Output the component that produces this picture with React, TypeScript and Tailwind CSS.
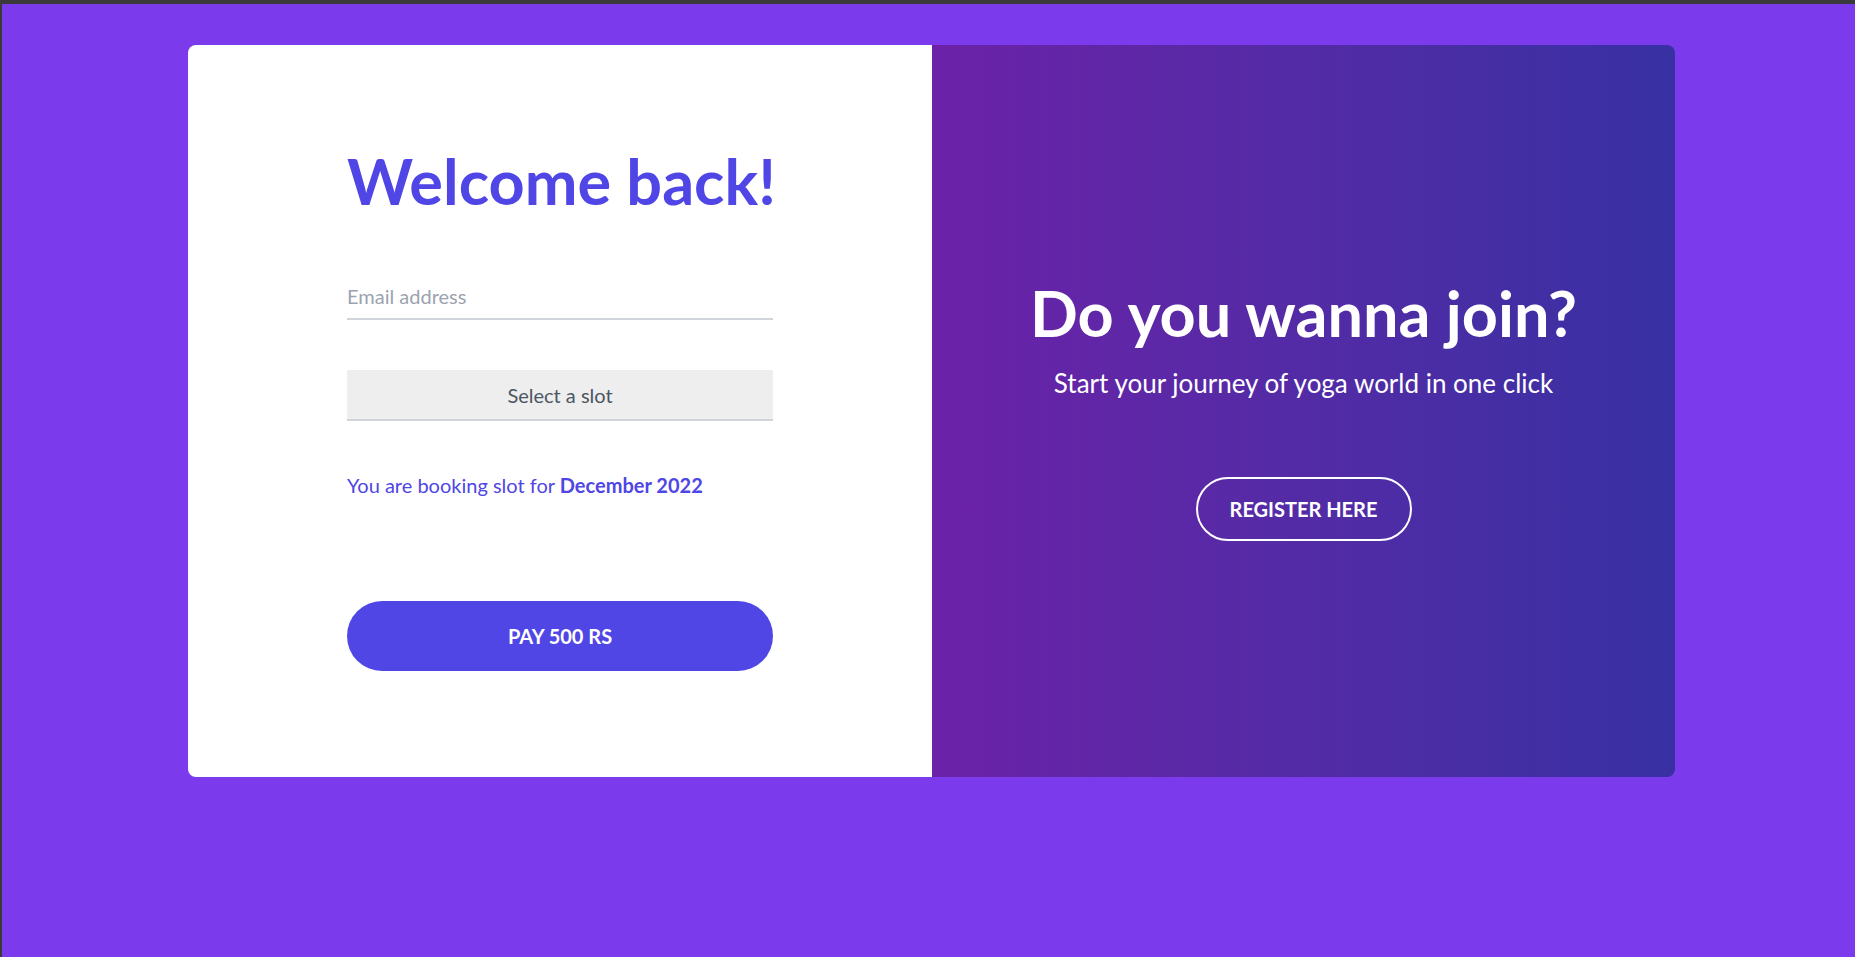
export default function App() {
  return (
    <div className="min-h-screen bg-[#7c3aed] border-t-4 border-l-2 border-[#3a3a3a] font-['Lato',sans-serif]">
      <div className="ml-[186px] mt-[41px] w-[1487px] h-[732px] flex rounded-lg overflow-hidden">
        <div className="w-[744px] bg-white flex flex-col items-center">
          <div className="w-[426px] flex flex-col">
            <h1 className="mt-[102px] h-[68px] text-[63px] leading-[68px] font-bold text-[#4f46e5] whitespace-nowrap">
              Welcome back!
            </h1>
            <input
              type="email"
              placeholder="Email address"
              className="mt-[59px] h-[46px] w-full border-b-2 border-[#d1d5db] text-[20px] text-gray-700 placeholder:text-[#9ca3af] outline-none"
            />
            <button className="mt-[50px] h-[51px] w-full bg-[#eeeeee] border-b-2 border-[#d1d5db] text-[20px] text-[#4b5563]">
              Select a slot
            </button>
            <p className="mt-[52px] text-[20px] leading-[24px] text-[#4f46e5]">
              You are booking slot for <span className="font-bold">December 2022</span>
            </p>
            <button className="mt-[104px] h-[70px] w-full rounded-full bg-[#4f46e5] text-white text-[20px] font-bold">
              PAY 500 RS
            </button>
          </div>
        </div>
        <div className="flex-1 bg-gradient-to-r from-[#6b21a8] to-[#3730a3] flex flex-col items-center justify-center text-white">
          <h2 className="text-[63px] leading-[64px] font-bold whitespace-nowrap">Do you wanna join?</h2>
          <p className="mt-[24px] text-[26px] leading-[28px]">Start your journey of yoga world in one click</p>
          <button className="mt-[80px] w-[216px] h-[64px] rounded-full border-2 border-white text-[20px] font-bold">
            REGISTER HERE
          </button>
        </div>
      </div>
    </div>
  );
}
